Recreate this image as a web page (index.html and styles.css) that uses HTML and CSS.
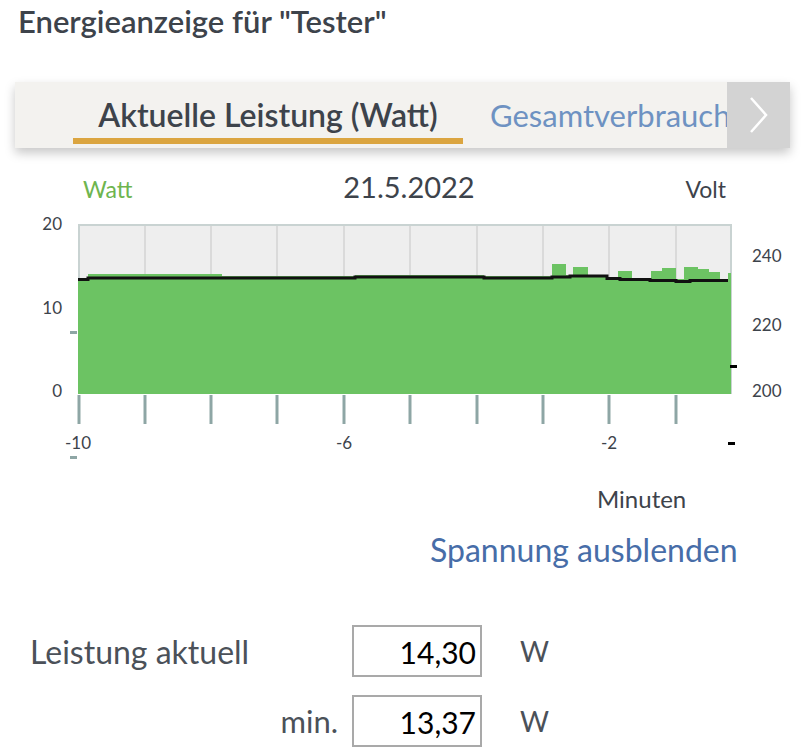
FILE: index.html
```html
<!DOCTYPE html>
<html lang="de">
<head>
<meta charset="UTF-8">
<meta name="viewport" content="width=device-width, initial-scale=1.0">
<title>Energieanzeige</title>
    <link rel="stylesheet" href="styles.css">
</head>
<body>
    <h1 class="title">Energieanzeige für "Tester"</h1>

    <!-- tab bar -->
    <div class="tabs">
        <div class="tab-list">
            <div class="tab active">Aktuelle Leistung (Watt)</div>
            <div class="tab">Gesamtverbrauch</div>
        </div>
        <div class="tab-next">
            <svg width="24" height="40" viewBox="0 0 24 40"><path d="M4 3 L19 20 L4 37" fill="none" stroke="#fff" stroke-width="2.5"/></svg>
        </div>
    </div>

    <!-- chart head -->
    <div class="chart-head">
        <span class="unit-watt">Watt</span>
        <span class="chart-date">21.5.2022</span>
        <span class="unit-volt">Volt</span>
    </div>

    <!-- chart -->
    <svg class="chart" width="807" height="265" viewBox="0 212 807 265">
        <rect x="78" y="226" width="653" height="170" fill="#eeeeee"/>
        <g stroke="#d3d3d3" stroke-width="1.5">
            <line x1="145" y1="227" x2="145" y2="396"/>
            <line x1="211" y1="227" x2="211" y2="396"/>
            <line x1="277" y1="227" x2="277" y2="396"/>
            <line x1="344" y1="227" x2="344" y2="396"/>
            <line x1="410" y1="227" x2="410" y2="396"/>
            <line x1="477" y1="227" x2="477" y2="396"/>
            <line x1="543" y1="227" x2="543" y2="396"/>
            <line x1="609" y1="227" x2="609" y2="396"/>
            <line x1="676" y1="227" x2="676" y2="396"/>
        </g>
        <line x1="78" y1="227" x2="731" y2="227" stroke="#c9d3d2" stroke-width="2"/>
        <line x1="79" y1="226" x2="79" y2="396" stroke="#c9d3d2" stroke-width="2"/>
        <line x1="731" y1="226" x2="731" y2="396" stroke="#c9d3d2" stroke-width="2"/>

        <!-- watt -->
        <polygon fill="#6cc363" points="78,396 78,280 88,280 88,276 222,276 222,278 355,278 355,277 484,277 484,278 552,278 552,266 566,266 566,277 573,277 573,269 588,269 588,277 607,277 607,279 618,279 618,273 632,273 632,280 651,280 651,273 662,273 662,270 676,270 676,281 684,281 684,269 698,269 698,271 709,271 709,274 720,274 720,282 728,282 728,275 731,275 731,396"/>

        <!-- volt -->
        <polyline fill="none" stroke="#111" stroke-width="3" points="78,281.5 88,281.5 88,280 355,280 355,279 484,279 484,280 552,280 552,279 570,279 570,278 607,278 607,280.5 620,280.5 620,281.5 650,281.5 650,282.5 676,282.5 676,283.5 690,283.5 690,282.5 728,282.5"/>

        <!-- x ticks -->
        <g stroke="#8ea6a5" stroke-width="3">
            <line x1="79" y1="397" x2="79" y2="426"/>
            <line x1="145" y1="397" x2="145" y2="426"/>
            <line x1="211" y1="397" x2="211" y2="426"/>
            <line x1="277" y1="397" x2="277" y2="426"/>
            <line x1="344" y1="397" x2="344" y2="426"/>
            <line x1="410" y1="397" x2="410" y2="426"/>
            <line x1="477" y1="397" x2="477" y2="426"/>
            <line x1="543" y1="397" x2="543" y2="426"/>
            <line x1="609" y1="397" x2="609" y2="426"/>
            <line x1="676" y1="397" x2="676" y2="426"/>
        </g>
        <rect x="70" y="333" width="7" height="3" fill="#8ea6a5"/>
        <rect x="70" y="458" width="7" height="3" fill="#8ea6a5"/>
        <rect x="730" y="367" width="7" height="3" fill="#000"/>
        <rect x="728" y="444" width="7" height="3" fill="#000"/>

        <g class="axis-text">
            <text x="62" y="232" text-anchor="end">20</text>
            <text x="62" y="316" text-anchor="end">10</text>
            <text x="62" y="399" text-anchor="end">0</text>
            <text x="752" y="264">240</text>
            <text x="752" y="333">220</text>
            <text x="752" y="399">200</text>
            <text x="78" y="451" text-anchor="middle">-10</text>
            <text x="344" y="451" text-anchor="middle">-6</text>
            <text x="609" y="451" text-anchor="middle">-2</text>
        </g>
    </svg>

    <div class="x-title">Minuten</div>

    <div class="toggle">
        <a href="#" class="toggle-link">Spannung ausblenden</a>
    </div>

    <!-- values -->
    <div class="values">
        <label class="value-label" for="now">Leistung aktuell</label>
        <input class="value-box" id="now" type="text" value="14,30" readonly>
        <span class="value-unit">W</span>

        <label class="value-label right" for="min">min.</label>
        <input class="value-box" id="min" type="text" value="13,37" readonly>
        <span class="value-unit">W</span>
    </div>
</body>
</html>
```

FILE: styles.css
```css
body{
    margin: 0;
    background-color: #ffffff;
    font-family: "Lato", "Liberation Sans", sans-serif;
    color: #454a52;
    overflow: hidden;
}
.title{
    margin: 0;
    padding: 4px 0 0 18px;
    font-size: 31px;
    font-weight: 600;
    line-height: 34px;
    color: #3d434b;
}
.tabs{
    display: flex;
    height: 66px;
    margin: 44px 17px 0 15px;
    background-color: #f3f2ef;
    box-shadow: 0 5px 10px rgba(0,0,0,0.22);
}
.tab-list{
    flex: 1;
    display: flex;
    overflow: hidden;
    padding-left: 58px;
}
.tab{
    flex: none;
    height: 66px;
    line-height: 66px;
    font-size: 31px;
    color: #6e92c2;
    white-space: nowrap;
}
.tab.active{
    box-sizing: border-box;
    width: 390px;
    margin-right: 27px;
    text-align: center;
    font-weight: 600;
    font-size: 32px;
    color: #3d434b;
    border-bottom: 6px solid #dba540;
    height: 62px;
    line-height: 65px;
}
.tab-next{
    width: 63px;
    flex: none;
    display: flex;
    align-items: center;
    justify-content: center;
    background-color: #d3d3d3;
}
.chart-head{
    display: flex;
    justify-content: space-between;
    align-items: baseline;
    margin: 21px 81px 0 83px;
    height: 41px;
}
.unit-watt{
    font-size: 23px;
    color: #6eb54f;
}
.chart-date{
    font-size: 29px;
    color: #3d434b;
}
.unit-volt{
    font-size: 23px;
    color: #3d434b;
}
.chart{
    display: block;
}
.axis-text{
    font-family: "Lato", "Liberation Sans", sans-serif;
    font-size: 17px;
    fill: #3d434b;
}
.x-title{
    padding: 9px 0 0 597px;
    font-size: 24px;
    line-height: 30px;
    color: #3d434b;
}
.toggle{
    padding: 16px 0 0 430px;
    line-height: 40px;
}
.toggle-link{
    font-size: 32px;
    color: #476da8;
    text-decoration: none;
}
.values{
    display: grid;
    grid-template-columns: 308px 130px auto;
    column-gap: 14px;
    row-gap: 18px;
    align-items: center;
    margin-top: 49px;
    padding-left: 30px;
}
.value-label{
    font-size: 32px;
    color: #4b5159;
}
.value-label.right{
    text-align: right;
    font-size: 31px;
}
.value-box{
    box-sizing: border-box;
    width: 130px;
    height: 52px;
    margin: 0;
    padding: 2px 4px 0 0;
    border: 2px solid #a9a9a9;
    border-radius: 0;
    font-family: "Lato", "Liberation Sans", sans-serif;
    font-size: 30px;
    color: #000;
    text-align: right;
    background: #fff;
}
.value-unit{
    padding-left: 24px;
    font-size: 28px;
    color: #4b5159;
}
```
